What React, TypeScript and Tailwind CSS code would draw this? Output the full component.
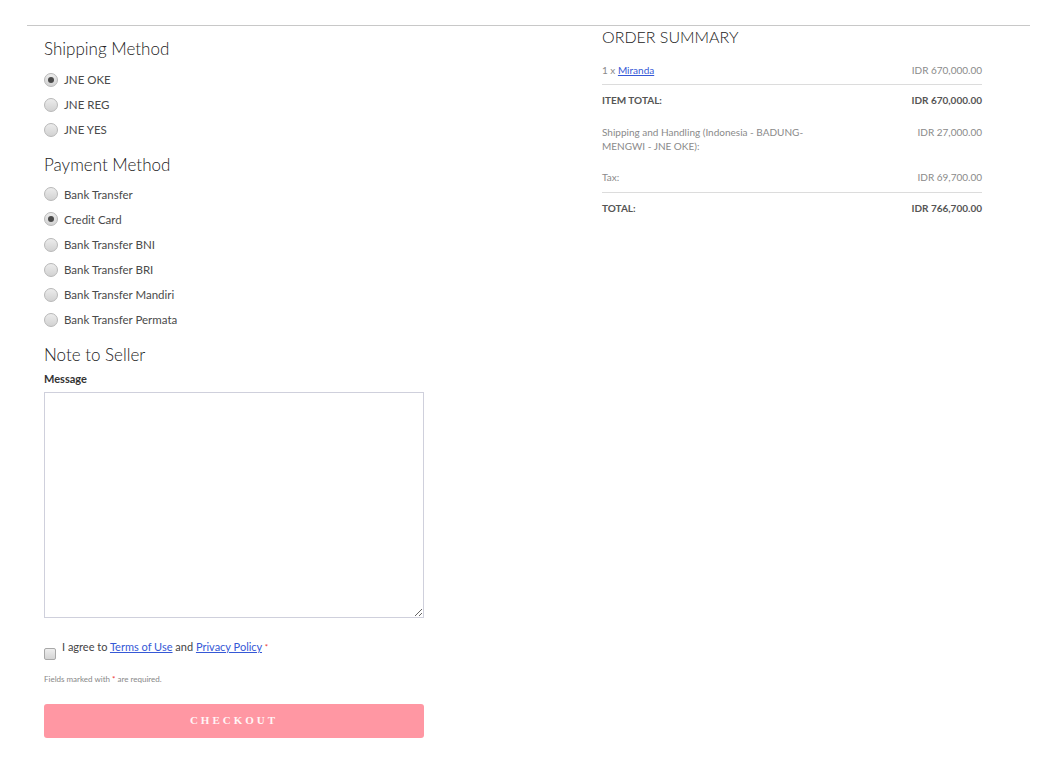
import React from 'react';

const font = { fontFamily: 'Lato, "Open Sans", sans-serif' };

function Radio({ label, checked }: { label: string; checked?: boolean }) {
  return (
    <label className="flex h-[25.2px] items-center gap-[6px]">
      <span className="flex h-[14px] w-[14px] items-center justify-center rounded-full border border-[#b8b8b8] bg-gradient-to-b from-[#ececec] to-[#d2d2d2]">
        {checked && <span className="h-[6px] w-[6px] rounded-full bg-[#4a4a4a]" />}
      </span>
      <span className="text-[11.5px] text-[#4a4a4a]">{label}</span>
    </label>
  );
}

function SummaryRow({
  label,
  value,
  bold,
  border,
  pb,
}: {
  label: React.ReactNode;
  value: string;
  bold?: boolean;
  border?: boolean;
  pb: string;
}) {
  return (
    <div className={`flex justify-between pt-[8px] text-[10px] leading-[14px] ${pb} ${border ? 'border-b border-[#dcdcdc]' : ''} ${bold ? 'font-bold text-[#555]' : 'text-[#8a8a8a]'}`}>
      <div className="w-[230px]">{label}</div>
      <div>{value}</div>
    </div>
  );
}

export default function App() {
  const shipping = ['JNE OKE', 'JNE REG', 'JNE YES'];
  const payment = ['Bank Transfer', 'Credit Card', 'Bank Transfer BNI', 'Bank Transfer BRI', 'Bank Transfer Mandiri', 'Bank Transfer Permata'];

  return (
    <div className="min-h-[759px] bg-white pt-[25px]" style={font}>
      <div className="ml-[27px] flex w-[1003px] border-t border-[#c8c8c8] pl-[17px]">
        {/* left column */}
        <div className="w-[380px]">
          <h2 className="mt-[11px] mb-[6px] text-[17px] font-light leading-[24px] text-[#222]">Shipping Method</h2>
          {shipping.map((s) => (
            <Radio key={s} label={s} checked={s === 'JNE OKE'} />
          ))}

          <h2 className="mt-[10px] mb-[5px] text-[17px] font-light leading-[24px] text-[#222]">Payment Method</h2>
          {payment.map((p) => (
            <Radio key={p} label={p} checked={p === 'Credit Card'} />
          ))}

          <h2 className="mt-[10px] text-[17px] font-light leading-[24px] text-[#222]">Note to Seller</h2>
          <div className="mt-[5px] text-[11px] font-bold leading-[14px] text-[#333]">Message</div>
          <textarea className="mt-[6px] block h-[226px] w-[380px] border border-[#cfd0dc] outline-none" />

          <div className="mt-[21px] flex items-start gap-[6px]">
            <span className="mt-[9px] h-[12px] w-[12px] rounded-[2px] border border-[#a8a8a8] bg-gradient-to-b from-[#eee] to-[#d4d4d4]" />
            <span className="text-[11px] leading-[16px] text-[#444]">
              I agree to <a className="text-[#3558d6] underline">Terms of Use</a> and{' '}
              <a className="text-[#3558d6] underline">Privacy Policy</a> <span className="text-[8px] align-top text-[#e33]">*</span>
            </span>
          </div>
          <div className="mt-[13px] text-[8px] leading-[12px] text-[#888]">
            Fields marked with <span className="text-[#e33]">*</span> are required.
          </div>
          <button
            className="mt-[19px] flex h-[34px] w-[380px] items-center justify-center rounded-[3px] bg-[#ff97a3] text-[11px] font-bold tracking-[3px] text-[#fff5f6]"
            style={{ fontFamily: '"Liberation Serif", serif' }}
          >
            CHECKOUT
          </button>
        </div>

        {/* right column */}
        <div className="ml-[178px] w-[380px]">
          <h2 className="mt-0 mb-[7px] text-[16px] font-light uppercase leading-[22px] text-[#222]">Order Summary</h2>
          <SummaryRow
            border
            pb="pb-[7px]"
            label={
              <>
                1 x <a className="text-[#3558d6] underline">Miranda</a>
              </>
            }
            value="IDR 670,000.00"
          />
          <SummaryRow bold pb="pb-[10px]" label="ITEM TOTAL:" value="IDR 670,000.00" />
          <SummaryRow pb="pb-[9px]" label="Shipping and Handling (Indonesia - BADUNG-MENGWI - JNE OKE):" value="IDR 27,000.00" />
          <SummaryRow border pb="pb-[8px]" label="Tax:" value="IDR 69,700.00" />
          <SummaryRow bold pb="pb-[8px]" label="TOTAL:" value="IDR 766,700.00" />
        </div>
      </div>
    </div>
  );
}
